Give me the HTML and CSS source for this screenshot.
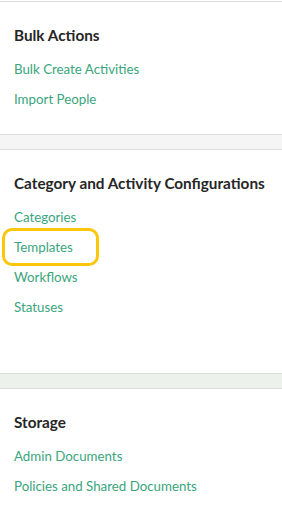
FILE: index.html
```html
<!DOCTYPE html>
<html lang="en">
<head>
  <meta charset="UTF-8">
  <title>Admin Settings</title>
  <meta name="viewport" content="width=device-width, initial-scale=1.0">
  <link rel="stylesheet" href="styles.css">
</head>
<body>

<div class="panel">
  <h3>Bulk Actions</h3>
  <ul>
    <li><a href="#">Bulk Create Activities</a></li>
    <li><a href="#">Import People</a></li>
  </ul>
</div>

<div class="spacer"></div>

<div class="panel tall">
  <h3>Category and Activity Configurations</h3>
  <ul>
    <li><a href="#">Categories</a></li>
    <li><a href="#" class="marked">Templates</a></li>
    <li><a href="#">Workflows</a></li>
    <li><a href="#">Statuses</a></li>
  </ul>
</div>

<div class="spacer green"></div>

<div class="panel">
  <h3>Storage</h3>
  <ul>
    <li><a href="#">Admin Documents</a></li>
    <li><a href="#">Policies and Shared Documents</a></li>
  </ul>
</div>

</body>
</html>
```

FILE: styles.css
```css
* {
  box-sizing: border-box;
}

body {
  margin: 0;
  padding-top: 1px;
  background: #fff;
  font-family: 'Lato', 'Open Sans', sans-serif;
  color: #2b2b2b;
}

.panel {
  background: #fff;
  border-top: 1px solid #dcdcdc;
  border-bottom: 1px solid #dcdcdc;
  padding: 23px 14px 20px;
}

.panel.tall {
  padding-bottom: 51px;
}

.spacer {
  height: 14px;
  background: #f5f5f5;
}

.spacer.green {
  background: #edf1ec;
}

h3 {
  margin: 0 0 9px;
  font-size: 15.3px;
  line-height: 20px;
  font-weight: 700;
  color: #262626;
}

ul {
  list-style: none;
  margin: 0;
  padding: 0;
}

li {
  line-height: 30px;
  font-size: 13.3px;
}

a {
  color: #3aa57c;
  text-decoration: none;
}

.marked {
  display: inline-block;
  position: relative;
}

.marked::after {
  content: "";
  position: absolute;
  left: -12px;
  right: -26px;
  top: -4px;
  bottom: -4px;
  border: 3px solid #fcc60a;
  border-radius: 10px;
}
```
